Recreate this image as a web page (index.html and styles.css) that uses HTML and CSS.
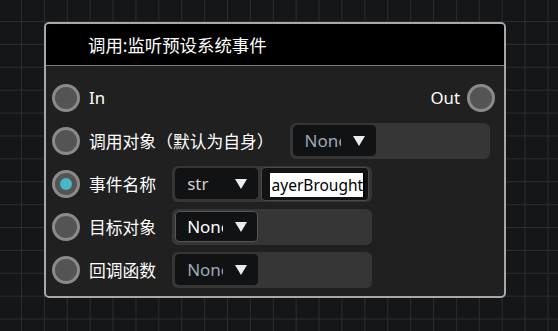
FILE: index.html
```html
<!DOCTYPE html>
<html lang="zh">
  <head>
    <meta charset="UTF-8" />
    <title>调用:监听预设系统事件</title>
    <link rel="stylesheet" href="styles.css">
  </head>
  <body>
    <div class="node">
      <div class="node-title">调用:监听预设系统事件</div>
      <div class="node-body">
        <div class="row">
          <span class="pin"></span>
          <span class="label">In</span>
          <span class="label out">Out</span>
          <span class="pin"></span>
        </div>
        <div class="row">
          <span class="pin"></span>
          <span class="label">调用对象（默认为自身）</span>
          <div class="field">
            <div class="combo dim"><span class="combo-text">None</span><span class="arrow"></span></div>
          </div>
        </div>
        <div class="row">
          <span class="pin linked"></span>
          <span class="label">事件名称</span>
          <div class="field">
            <div class="combo"><span class="combo-text str">str</span><span class="arrow"></span></div>
            <div class="text-box"><span class="text-value"><span>ayerBrought</span></span></div>
          </div>
        </div>
        <div class="row">
          <span class="pin"></span>
          <span class="label">目标对象</span>
          <div class="field">
            <div class="combo active"><span class="combo-text">None</span><span class="arrow"></span></div>
          </div>
        </div>
        <div class="row">
          <span class="pin"></span>
          <span class="label">回调函数</span>
          <div class="field">
            <div class="combo dim"><span class="combo-text">None</span><span class="arrow"></span></div>
          </div>
        </div>
      </div>
    </div>
  </body>
</html>
```

FILE: styles.css
```css
body {
  margin: 0;
  width: 558px;
  height: 331px;
  overflow: hidden;
  background-color: #151618;
  background-image:
    linear-gradient(to right, #2b2c2f 1px, transparent 1px),
    linear-gradient(to bottom, #2b2c2f 1px, transparent 1px);
  background-size: 22.9px 22.9px;
  background-position: 21px 21px;
  font-family: "Noto Sans", "Noto Sans CJK SC", sans-serif;
  color: #ffffff;
}

.node {
  position: absolute;
  left: 44px;
  top: 22px;
  width: 458px;
  border: 2px solid #a8a8a8;
  border-radius: 5px;
  overflow: hidden;
  background-color: #202020;
}

.node-title {
  height: 41px;
  background-color: #000000;
  border-bottom: 1px solid #7a7a7a;
  padding-left: 42px;
  display: flex;
  align-items: center;
  font-size: 17.4px;
}

.node-body {
  padding: 10px 0 5px 6px;
}

.row {
  height: 43px;
  display: flex;
  align-items: center;
}

.pin {
  width: 22px;
  height: 22px;
  border: 3px solid #8a8a8a;
  border-radius: 50%;
  background-color: #545454;
  margin-right: 9px;
  position: relative;
}

.pin.linked::after {
  content: "";
  position: absolute;
  left: 5px;
  top: 5px;
  width: 12px;
  height: 12px;
  border-radius: 50%;
  background-color: #47b7c6;
}

.label {
  font-size: 16.8px;
}

.label.out {
  margin-left: auto;
  margin-right: 7px;
}

.field {
  margin-left: 16px;
  width: 194px;
  height: 36px;
  padding: 0 3px;
  box-sizing: content-box;
  background-color: #363636;
  border-radius: 6px;
  display: flex;
  align-items: center;
  gap: 3px;
}

.combo {
  width: 83px;
  height: 31px;
  box-sizing: border-box;
  background-color: #111213;
  border: 1px solid #111213;
  border-radius: 4px;
  display: flex;
  align-items: center;
  padding-left: 11px;
}

.combo.active {
  border-color: #555555;
}

.combo-text {
  width: 36px;
  overflow: hidden;
  white-space: nowrap;
  font-size: 17px;
  color: #ffffff;
}

.combo.dim .combo-text {
  color: #a0a8b2;
}

.combo-text.str {
  color: #d0d0d0;
}

.arrow {
  margin-left: 12px;
  width: 0;
  height: 0;
  border-left: 6px solid transparent;
  border-right: 6px solid transparent;
  border-top: 10px solid #ececec;
}

.text-box {
  width: 108px;
  height: 34px;
  box-sizing: border-box;
  background-color: #111213;
  border: 1px solid #4a4a4a;
  border-radius: 4px;
  padding: 5px 3px 5px 8px;
}

.text-value {
  height: 24px;
  background-color: #ffffff;
  color: #000000;
  font-size: 15.5px;
  line-height: 24px;
  white-space: nowrap;
  overflow: hidden;
  display: flex;
  justify-content: flex-end;
  border-right: 2px solid #000000;
}
```
